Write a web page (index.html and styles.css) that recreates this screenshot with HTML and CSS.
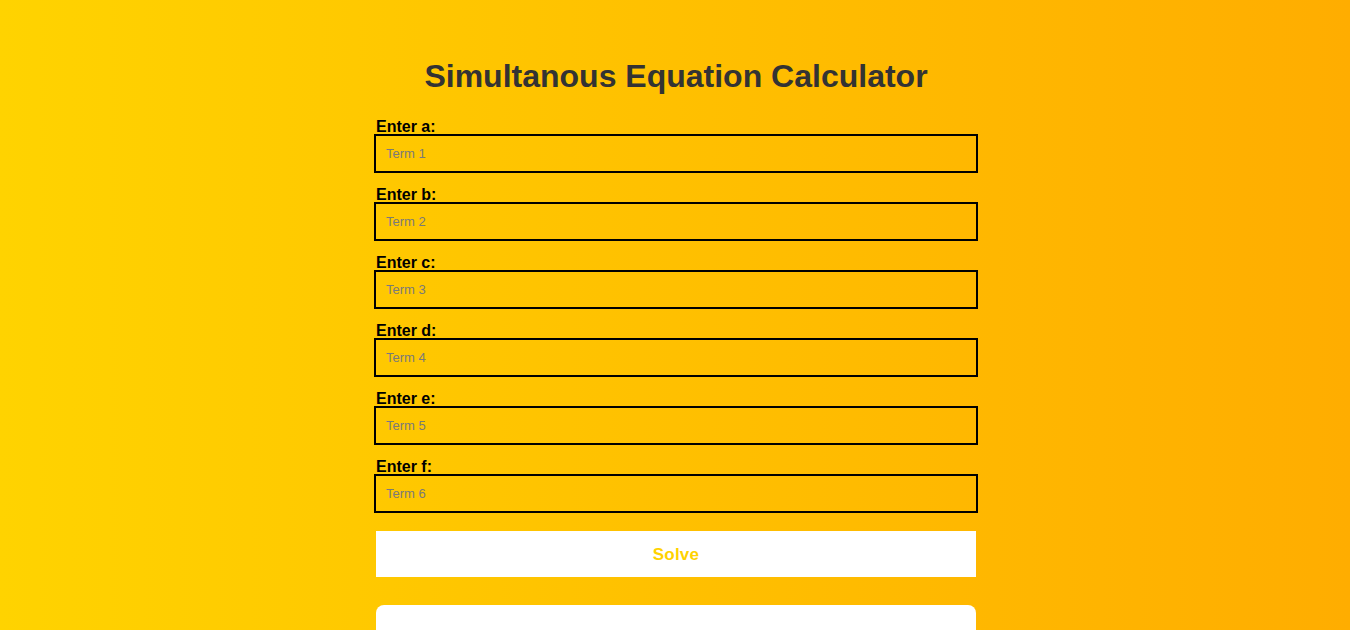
FILE: index.html
```html
<!DOCTYPE html>
<html lang="en">
<head>
<meta charset="utf-8">
<title>Simultanous Equation Calculator</title>
<link rel="stylesheet" href="styles.css">
</head>
<body>
<div class="calculator">
  <h1 class="title">Simultanous Equation Calculator</h1>
  <form class="form">
    <div class="field">
      <label class="label" for="a">Enter a:</label>
      <input class="input" id="a" type="text" placeholder="Term 1">
    </div>
    <div class="field">
      <label class="label" for="b">Enter b:</label>
      <input class="input" id="b" type="text" placeholder="Term 2">
    </div>
    <div class="field">
      <label class="label" for="c">Enter c:</label>
      <input class="input" id="c" type="text" placeholder="Term 3">
    </div>
    <div class="field">
      <label class="label" for="d">Enter d:</label>
      <input class="input" id="d" type="text" placeholder="Term 4">
    </div>
    <div class="field">
      <label class="label" for="e">Enter e:</label>
      <input class="input" id="e" type="text" placeholder="Term 5">
    </div>
    <div class="field">
      <label class="label" for="f">Enter f:</label>
      <input class="input" id="f" type="text" placeholder="Term 6">
    </div>
    <button class="solve" type="button">Solve</button>
  </form>
  <div class="result"></div>
</div>
</body>
</html>
```

FILE: styles.css
```css
html, body {
  height: 100%;
}
body {
  margin: 0;
  background: linear-gradient(to right, #ffd300, #ffad00);
  font-family: "Liberation Sans", Arial, sans-serif;
  overflow: hidden;
}
.calculator {
  width: 600px;
  margin-left: calc(50% - 299px);
  padding-top: 37px;
}
.title {
  margin: 21px 0 21px;
  font-size: 32px;
  line-height: 37px;
  font-weight: bold;
  color: #333;
  text-align: center;
}
.form {
  display: flex;
  flex-direction: column;
}
.field {
  display: flex;
  flex-direction: column;
  margin-bottom: 11px;
}
.label {
  display: block;
  height: 18px;
  line-height: 22px;
  font-size: 16px;
  font-weight: bold;
  color: #000;
}
.input {
  box-sizing: border-box;
  width: calc(100% + 4px);
  margin: 0 -2px;
  height: 39px;
  padding: 0 10px;
  border: 2px solid #000;
  background: transparent;
  font-family: "Liberation Sans", Arial, sans-serif;
  font-size: 13px;
  color: #000;
  outline: none;
}
.input::placeholder {
  color: #7a7a7a;
}
.solve {
  margin-top: 7px;
  height: 46px;
  padding-top: 3px;
  border: none;
  background: #fff;
  color: #ffd200;
  font-family: "Liberation Sans", Arial, sans-serif;
  font-size: 17px;
  font-weight: bold;
  letter-spacing: 0.2px;
  cursor: pointer;
}
.result {
  margin-top: 28px;
  height: 120px;
  background: #fff;
  border-radius: 8px;
}
```
